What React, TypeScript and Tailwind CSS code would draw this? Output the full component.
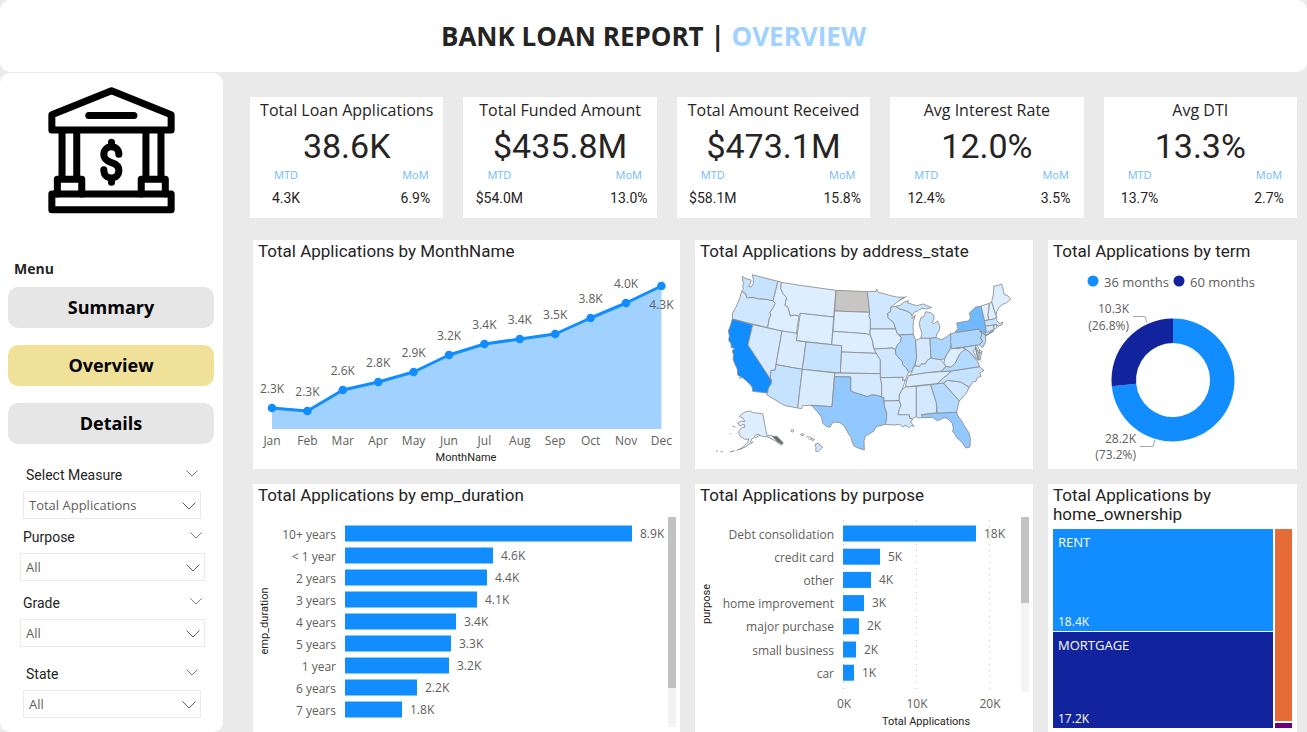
import React, { useId } from "react";

const SEGOE = "font-['Open_Sans','Noto_Sans',sans-serif]";
const DIN = "font-['Roboto','Liberation_Sans',sans-serif]";

const kpis = [
  { title: "Total Loan Applications", value: "38.6K", mtd: "4.3K", mom: "6.9%" },
  { title: "Total Funded Amount", value: "$435.8M", mtd: "$54.0M", mom: "13.0%" },
  { title: "Total Amount Received", value: "$473.1M", mtd: "$58.1M", mom: "15.8%" },
  { title: "Avg Interest Rate", value: "12.0%", mtd: "12.4%", mom: "3.5%" },
  { title: "Avg DTI", value: "13.3%", mtd: "13.7%", mom: "2.7%" },
];

const months = [
  { name: "Jan", y: 168, label: "2.3K" },
  { name: "Feb", y: 171, label: "2.3K" },
  { name: "Mar", y: 150, label: "2.6K" },
  { name: "Apr", y: 142, label: "2.8K" },
  { name: "May", y: 132, label: "2.9K" },
  { name: "Jun", y: 115, label: "3.2K" },
  { name: "Jul", y: 104, label: "3.4K" },
  { name: "Aug", y: 99, label: "3.4K" },
  { name: "Sep", y: 94, label: "3.5K" },
  { name: "Oct", y: 78, label: "3.8K" },
  { name: "Nov", y: 63, label: "4.0K" },
  { name: "Dec", y: 46, label: "4.3K" },
];

type Bar = { name: string; size: number; label: string };

const empBars: Bar[] = [
  { name: "10+ years", size: 287, label: "8.9K" },
  { name: "< 1 year", size: 148, label: "4.6K" },
  { name: "2 years", size: 142, label: "4.4K" },
  { name: "3 years", size: 132, label: "4.1K" },
  { name: "4 years", size: 111, label: "3.4K" },
  { name: "5 years", size: 106, label: "3.3K" },
  { name: "1 year", size: 104, label: "3.2K" },
  { name: "6 years", size: 72, label: "2.2K" },
  { name: "7 years", size: 57, label: "1.8K" },
];

const purposeBars: Bar[] = [
  { name: "Debt consolidation", size: 133, label: "18K" },
  { name: "credit card", size: 37, label: "5K" },
  { name: "other", size: 28, label: "4K" },
  { name: "home improvement", size: 21, label: "3K" },
  { name: "major purchase", size: 16, label: "2K" },
  { name: "small business", size: 13, label: "2K" },
  { name: "car", size: 11, label: "1K" },
];

/* State outlines: [id, fill, points] */
const states: [string, string, string][] = [
  ["WA", "#c5e2ff", "157,126 168,133 183,137 182,146 175,156 184,158 190,148 190,135 187,121 264,141 249,200 238,198 228,195 205,194 192,190 170,190 167,178 155,171 160,165 158,155 161,148 158,140"],
  ["OR", "#d0e8ff", "155,171 167,178 170,190 192,190 205,194 228,195 249,200 256,207 250,219 240,234 243,242 238,252 233,280 127,254 128,236 138,218 148,195"],
  ["CA", "#118dff", "127,254 188,271 174,332 245,438 243,450 236,460 232,476 188,471 187,460 182,452 166,437 158,430 143,422 142,405 136,392 129,375 131,362 127,350 134,342 124,340 123,328 116,318 118,304 115,290 122,272"],
  ["NV", "#d6eaff", "188,271 276,290 255,408 243,408 241,434 174,332"],
  ["ID", "#dceeff", "264,141 274,144 272,163 279,178 290,190 285,213 294,219 298,233 301,245 314,242 327,245 319,298 276,290 233,280 238,252 243,242 240,234 250,219 256,207 249,200"],
  ["MT", "#dceeff", "274,144 330,153 438,168 431,248 331,237 327,245 314,242 301,245 298,233 294,219 285,213 290,190 279,178 272,163"],
  ["WY", "#dceeff", "331,237 431,248 425,331 319,319"],
  ["UT", "#d9ecff", "276,290 322,297 319,319 348,323 337,405 258,391"],
  ["CO", "#c5e2ff", "348,323 455,334 451,416 337,405"],
  ["AZ", "#c5e2ff", "258,391 337,405 323,521 285,514 229,481 232,476 236,460 243,450 245,438 241,430 243,408 255,408"],
  ["NM", "#d9ecff", "337,405 434,416 426,517 364,513 337,514 335,523 323,521"],
  ["ND", "#c8c6c4", "438,168 532,172 535,190 539,234 434,230"],
  ["SD", "#dceeff", "434,230 539,234 537,245 542,255 541,285 539,293 543,305 528,298 514,297 429,291"],
  ["NE", "#dceeff", "429,291 514,297 528,298 541,302 547,318 549,333 558,357 455,353 455,334 425,331"],
  ["KS", "#d6eaff", "455,353 558,357 563,364 571,376 571,418 451,416"],
  ["OK", "#d3e9ff", "434,416 571,418 575,450 575,488 560,483 545,482 533,487 525,485 508,479 496,476 482,470 482,428 434,427"],
  ["TX", "#90c8ff", "434,427 482,428 482,470 496,476 508,479 525,485 533,487 545,482 560,483 582,490 583,515 590,535 590,552 586,570 570,574 558,578 552,590 540,597 526,606 522,620 523,647 507,642 492,635 486,622 484,610 474,596 463,575 450,565 432,563 426,567 420,579 408,575 398,567 395,550 382,532 364,513 426,517"],
  ["MN", "#cfe7ff", "532,172 558,171 560,165 566,175 580,177 598,183 620,188 643,189 624,201 602,219 602,232 593,237 594,250 611,265 617,284 541,284 541,255 537,245 539,234"],
  ["IA", "#dceeff", "541,284 617,284 622,298 634,310 632,322 622,332 616,346 608,341 552,344 547,318 540,300"],
  ["MO", "#cfe7ff", "552,344 608,341 616,346 618,360 629,374 637,380 638,391 650,403 656,414 650,426 646,440 637,438 639,429 571,430 571,376 563,364"],
  ["AR", "#d9ecff", "571,430 639,429 637,438 646,437 642,450 636,466 628,482 628,499 582,500 582,490 575,488 575,450"],
  ["LA", "#cfe7ff", "582,500 628,499 633,513 628,525 624,541 658,541 660,552 668,555 662,563 672,576 663,574 657,580 645,572 640,578 628,570 612,572 586,570 590,552 590,535 583,515"],
  ["WI", "#c8e4ff", "602,219 617,216 628,223 648,229 661,236 667,246 666,253 676,242 671,258 669,276 670,300 628,302 622,298 617,284 611,265 594,250 593,237 602,232"],
  ["IL", "#acd6ff", "628,302 670,300 677,318 680,370 677,385 670,397 668,410 658,414 650,403 638,391 637,380 629,374 618,360 616,346 622,332 632,322 634,310"],
  ["MI", "#c8e4ff", "617,216 632,212 642,203 655,199 653,206 664,209 680,214 700,209 725,220 707,224 696,222 685,229 672,234 667,243 661,236 648,229 628,223"],
  ["ML", "#c8e4ff", "692,312 696,298 690,280 688,265 693,250 702,246 707,232 722,235 732,243 732,254 726,265 733,268 742,260 750,275 748,288 741,298 738,310 720,312"],
  ["IN", "#d6eaff", "677,318 692,312 720,312 723,371 712,378 706,389 694,389 688,397 675,394 680,370"],
  ["OH", "#acd6ff", "720,312 738,310 755,316 769,308 782,298 786,322 780,345 772,358 764,373 752,376 736,374 723,371"],
  ["KY", "#cfe7ff", "658,424 665,415 668,405 675,394 688,397 694,389 706,389 712,378 723,371 736,374 752,376 762,387 768,396 755,410 713,415 680,420"],
  ["TN", "#d9ecff", "646,458 650,440 655,424 680,420 713,415 783,410 775,420 760,431 742,448 700,452"],
  ["MS", "#d9ecff", "646,458 679,456 679,547 668,552 660,552 658,541 624,541 628,525 633,513 628,499 628,482 636,466"],
  ["AL", "#d3e9ff", "679,456 722,451 739,505 740,536 695,541 698,550 686,551 679,547"],
  ["GA", "#b5daff", "722,451 761,446 768,456 782,470 795,485 808,500 803,520 800,534 742,537 739,505"],
  ["FL", "#90c8ff", "695,541 740,536 742,537 800,534 804,545 815,560 825,578 837,595 841,612 840,638 827,641 816,624 800,610 794,598 788,592 790,582 787,568 772,552 762,550 742,559 728,549 698,550"],
  ["SC", "#cfe7ff", "761,446 772,438 797,441 812,443 838,459 829,476 808,500 795,485 782,470"],
  ["NC", "#c5e2ff", "742,448 760,431 775,420 783,410 868,397 882,408 869,416 873,426 862,430 858,441 848,443 838,459 812,443 797,441 772,438 761,446"],
  ["VA", "#b5daff", "755,412 768,396 783,398 796,386 807,362 818,350 828,345 842,356 853,370 864,383 869,397 783,410"],
  ["WV", "#dceeff", "762,387 764,373 772,358 782,343 805,342 814,338 828,345 818,350 807,362 796,386 783,398 768,396"],
  ["MD", "#c5e2ff", "800,343 855,333 863,352 875,354 870,378 861,363 857,340 850,350 858,368 866,378 853,370 842,356 828,345 814,338"],
  ["DE", "#dceeff", "855,333 862,334 868,346 877,352 865,356"],
  ["PA", "#acd6ff", "782,298 795,295 868,284 876,297 872,311 878,322 868,331 786,343 782,325"],
  ["NJ", "#b5daff", "868,290 887,303 887,322 878,340 866,331 878,322 872,311 876,297"],
  ["NY", "#71b9ff", "795,294 804,282 800,266 820,262 835,260 842,250 838,236 856,219 873,215 879,240 885,265 887,303 908,288 912,290 888,305 868,284"],
  ["VT", "#dceeff", "873,215 898,207 897,226 894,240 896,257 884,259 879,240"],
  ["NH", "#dceeff", "898,207 905,202 912,225 920,247 912,254 896,257 894,240 897,226"],
  ["ME", "#dceeff", "905,202 910,180 912,155 922,154 934,149 938,158 942,180 952,184 963,193 950,205 938,210 928,218 920,232 918,243 912,225"],
  ["MA", "#c5e2ff", "884,259 912,254 920,247 920,259 929,268 939,263 936,271 926,276 919,271 911,272 886,276"],
  ["CT", "#cfe7ff", "886,276 911,272 912,285 890,295"],
  ["RI", "#dceeff", "911,272 919,271 921,280 912,285"],
  ["AK", "#dceeff", "155,540 165,533 178,530 190,535 218,538 231,604 244,603 255,610 262,607 280,627 273,632 255,619 233,608 213,605 206,600 196,602 192,610 184,615 182,626 168,637 150,645 164,634 173,625 176,614 165,615 152,607 146,598 148,588 155,580 165,578 163,570 149,574 143,566 152,560 164,562 160,552 148,547"],
  ["HI", "#cfe7ff", "375,630 384,627 398,638 383,653 377,650 378,640"],
];

function Chevron({ className }: { className: string }) {
  return (
    <svg viewBox="0 0 14 8" className={className} fill="none" stroke="#605e5c" aria-hidden="true">
      <path d="M0.5 0.5 L7 7 L13.5 0.5" />
    </svg>
  );
}

function BankIcon() {
  return (
    <svg
      viewBox="140 258 386 384"
      className="mx-auto w-[129px]"
      fill="none"
      stroke="#000"
      strokeWidth="21"
      strokeLinejoin="round"
      strokeLinecap="round"
      role="img"
      aria-label="Bank"
    >
      <path d="M154.500 344 L333 272 L511.500 344 V390 H154.500Z" />
      <path d="M265 346H400" />
      <path d="M185 390V537M229 390V537M436 390V537M481 390V537" strokeLinecap="butt" />
      <path d="M171 581V537H244V581M422 581V537H494V581" />
      <path d="M154.500 581H511.500V628H154.500Z" />
      <path d="M355 462C355 448 346 440 333 440C320 440 310 449 310 463C310 477 320 483 333 487C346 491 355 496 355 510C355 524 346 533 333 533C320 533 310 524 310 509M333 426V440M333 533V546" />
    </svg>
  );
}

function Slicer({ title, value, inset }: { title: string; value: string; inset?: boolean }) {
  const id = useId();
  return (
    <div className={inset ? "pr-[22px] pl-[23px]" : "pr-[18px] pl-5"}>
      <div className="flex h-5 items-center justify-between pr-[3px] pl-[3px]">
        <label htmlFor={id} className={`${DIN} text-[14px] text-[#252423]`}>
          {title}
        </label>
        <button type="button" aria-label={`Collapse ${title}`}>
          <Chevron className="mb-1 h-[7px] w-3" />
        </button>
      </div>
      <div className="relative mt-1.5">
        <select
          id={id}
          defaultValue={value}
          className={`${SEGOE} h-7 w-full appearance-none border border-[#eaeaea] bg-white px-[5px] text-[13px] text-[#605e5c]`}
        >
          <option>{value}</option>
        </select>
        <Chevron className="pointer-events-none absolute top-[11px] right-[5px] h-2 w-3.5" />
      </div>
    </div>
  );
}

function Panel({ title, children }: { title: string; children: React.ReactNode }) {
  return (
    <section className="flex flex-col bg-white">
      <h2 className={`${DIN} px-[5px] pt-0.5 text-[17px] leading-[19px] text-[#252423]`}>{title}</h2>
      {children}
    </section>
  );
}

function AreaChart() {
  const x = (i: number) => 19 + i * 35.4;
  const line = months.map((m, i) => `${x(i)},${m.y}`).join(" ");
  return (
    <svg viewBox="0 21 427 208" className="w-full" role="img" aria-label="Total Applications by MonthName">
      <polygon points={`${x(0)},189 ${line} ${x(11)},189`} fill="#a0d1ff" />
      <polyline points={line} fill="none" stroke="#118dff" strokeWidth="3" strokeLinejoin="round" />
      {months.map((m, i) => (
        <g key={m.name}>
          <circle cx={x(i)} cy={m.y} r="4.300" fill="#118dff" />
          <text x={x(i)} y={m.name === "Dec" ? m.y + 23 : m.y - 15} textAnchor="middle" className={`${SEGOE} fill-[#605e5c] text-[12px]`}>
            {m.label}
          </text>
          <text x={x(i)} y="205" textAnchor="middle" className={`${SEGOE} fill-[#605e5c] text-[12px]`}>
            {m.name}
          </text>
        </g>
      ))}
      <text x="213" y="221" textAnchor="middle" className={`${DIN} fill-[#252423] text-[11px]`}>
        MonthName
      </text>
    </svg>
  );
}

function StateMap() {
  return (
    <svg viewBox="15 80 1014 622" className="w-full" role="img" aria-label="Total Applications by state">
      <g stroke="#8a8a8a" strokeWidth="2.500" strokeLinejoin="round">
        {states.map(([id, fill, points]) => (
          <polygon key={id} points={points} fill={fill} />
        ))}
        <g fill="#dceeff">
          <circle cx="307" cy="589" r="4" />
          <ellipse cx="337" cy="601" rx="5" ry="3" />
          <path d="M349 607L361 608M355 613L362 616M362 610L374 616L367 619Z" />
        </g>
        <path d="M247 606L260 606L278 624L276 630L262 622Z" fill="#6b6b6b" />
        <path
          fill="none"
          strokeWidth="3"
          d="M78 650L83 650M92 652L98 652M120 653L134 649M140 648L155 642M119 598L122 598M128 575L136 579M182 628L190 622M195 611L210 603M147 430L155 432M628 198L650 186M856 340L864 372M868 345L866 376"
        />
      </g>
    </svg>
  );
}

function Donut() {
  const cx = 125;
  const cy = 140;
  const R = 61.5;
  const r = 37;
  const a = 0.734 * 2 * Math.PI;
  const p = (rad: number) => `${cx + rad * Math.sin(a)} ${cy - rad * Math.cos(a)}`;
  const label = `${SEGOE} fill-[#605e5c] text-[12px]`;
  return (
    <svg viewBox="0 21 249 208" className="w-full" role="img" aria-label="Total Applications by term">
      <circle cx="45" cy="41" r="5.500" fill="#118dff" />
      <text x="56" y="47" className={`${SEGOE} fill-[#605e5c] text-[13px]`}>36 months</text>
      <circle cx="131" cy="41" r="5.500" fill="#12239e" />
      <text x="142" y="47" className={`${SEGOE} fill-[#605e5c] text-[13px]`}>60 months</text>
      <path d={`M${cx} ${cy - R}A${R} ${R} 0 1 1 ${p(R)}L${p(r)}A${r} ${r} 0 1 0 ${cx} ${cy - r}Z`} fill="#118dff" />
      <path d={`M${p(R)}A${R} ${R} 0 0 1 ${cx} ${cy - R}V${cy - r}A${r} ${r} 0 0 0 ${p(r)}Z`} fill="#12239e" />
      <path d="M85 76.500H97L99 83M92 206.500H105L107 200" fill="none" stroke="#a6a6a6" />
      <text x="81" y="73" textAnchor="end" className={label}>10.3K</text>
      <text x="81" y="90" textAnchor="end" className={label}>(26.8%)</text>
      <text x="88" y="203" textAnchor="end" className={label}>28.2K</text>
      <text x="88" y="219" textAnchor="end" className={label}>(73.2%)</text>
    </svg>
  );
}

type BarChartProps = {
  bars: Bar[];
  width: number;
  left: number;
  step: number;
  axisTitle: string;
  axisY: number;
  thumb: number;
  track: number;
  children?: React.ReactNode;
};

function BarChart({ bars, width, left, step, axisTitle, axisY, thumb, track, children }: BarChartProps) {
  return (
    <svg viewBox={`0 21 ${width} 226`} className="w-full" role="img" aria-label={`Total Applications by ${axisTitle}`}>
      {children}
      {bars.map((b, i) => {
        const mid = 49.5 + i * step;
        return (
          <g key={b.name}>
            <text x={left - 9} y={mid + 5} textAnchor="end" className={`${SEGOE} fill-[#605e5c] text-[12px]`}>
              {b.name}
            </text>
            <rect x={left} y={mid - 8} width={b.size} height="16" fill="#118dff" />
            <text x={left + b.size + 8} y={mid + 4} className={`${SEGOE} fill-[#605e5c] text-[12px]`}>
              {b.label}
            </text>
          </g>
        );
      })}
      <text textAnchor="middle" transform={`translate(15 ${axisY}) rotate(-90)`} className={`${DIN} fill-[#252423] text-[11px]`}>
        {axisTitle}
      </text>
      <rect x={width - 12} y="33" width="8" height={track} fill="#f3f3f3" />
      <rect x={width - 12} y="33" width="8" height={thumb} fill="#c2c2c2" />
    </svg>
  );
}

function Treemap() {
  return (
    <div className={`${SEGOE} mx-[5px] mt-[5px] mb-1 flex flex-1 gap-0.5 text-[13px] leading-[18px] text-white`}>
      <div className="flex flex-1 flex-col gap-px">
        <div className="flex flex-[102] flex-col justify-between bg-[#118dff] px-[5px] pt-1">
          <span>RENT</span>
          <span className="text-[12px]">18.4K</span>
        </div>
        <div className="flex flex-[95] flex-col justify-between bg-[#12239e] px-[5px] pt-1">
          <span>MORTGAGE</span>
          <span className="text-[12px]">17.2K</span>
        </div>
      </div>
      <div className="flex w-[17px] flex-col gap-0.5">
        <div className="flex-1 bg-[#e66c37]" />
        <div className="h-[5px] bg-[#6b007b]" />
      </div>
    </div>
  );
}

export default function App() {
  return (
    <div className={`${SEGOE} flex min-h-screen flex-col bg-[#eaeaea]`}>
      <header className="flex h-[72px] items-center justify-center rounded-[10px] bg-white">
        <h1 className="text-[26px] font-bold text-[#252423]">
          BANK LOAN REPORT | <span className="text-[#a0d1ff]">OVERVIEW</span>
        </h1>
      </header>

      <div className="mt-px flex flex-1">
        <aside className="flex w-[223px] shrink-0 flex-col rounded-[10px] bg-white pt-[13px]">
          <BankIcon />
          <h2 className="mt-[45px] px-3.5 text-[14px] leading-5 font-bold text-[#252423]">Menu</h2>
          <nav className="mt-2 flex flex-col gap-[17px] pr-[9px] pl-2">
            <button type="button" className="h-[41px] rounded-[10px] bg-[#e6e6e6] text-[18px] font-bold text-black">
              Summary
            </button>
            <button type="button" aria-current="page" className="h-[41px] rounded-[10px] bg-[#f0e199] text-[18px] font-bold text-black">
              Overview
            </button>
            <button type="button" className="h-[41px] rounded-[10px] bg-[#e6e6e6] text-[18px] font-bold text-black">
              Details
            </button>
          </nav>
          <div className="mt-[21px] flex flex-col gap-2">
            <Slicer title="Select Measure" value="Total Applications" inset />
            <Slicer title="Purpose" value="All" />
          </div>
          <div className="mt-3 flex flex-col gap-[17px]">
            <Slicer title="Grade" value="All" />
            <Slicer title="State" value="All" inset />
          </div>
        </aside>

        <main className="flex min-w-0 flex-1 flex-col pt-6 pr-2.5">
          <div className="ml-[27px] grid grid-cols-5 gap-5">
            {kpis.map((k) => (
              <section key={k.title} className="flex h-[121px] flex-col bg-white pt-0.5">
                <h2 className="text-center text-[16px] leading-[22px] whitespace-nowrap text-[#252423]">{k.title}</h2>
                <p className={`${DIN} mt-1.5 text-center text-[34px] leading-[38px] text-[#252423]`}>{k.value}</p>
                <dl className="flex justify-between pl-2">
                  <div className="w-14 text-center">
                    <dt className="mt-0.5 text-[11px] leading-4 text-[#71b9ff]">MTD</dt>
                    <dd className={`${DIN} mt-1.5 text-[14px] leading-[18px] text-[#252423]`}>{k.mtd}</dd>
                  </div>
                  <div className="w-14 text-center">
                    <dt className="mt-0.5 text-[11px] leading-4 text-[#71b9ff]">MoM</dt>
                    <dd className={`${DIN} mt-1.5 text-[14px] leading-[18px] text-[#252423]`}>{k.mom}</dd>
                  </div>
                </dl>
              </section>
            ))}
          </div>

          <div className="mt-[22px] ml-[30px] grid flex-1 grid-cols-[427fr_338fr_249fr] grid-rows-[auto_1fr] gap-[15px]">
            <Panel title="Total Applications by MonthName">
              <AreaChart />
            </Panel>
            <Panel title="Total Applications by address_state">
              <StateMap />
            </Panel>
            <Panel title="Total Applications by term">
              <Donut />
            </Panel>
            <Panel title="Total Applications by emp_duration">
              <BarChart bars={empBars} width={427} left={92} step={22} axisTitle="emp_duration" axisY={137} thumb={171} track={210} />
            </Panel>
            <Panel title="Total Applications by purpose">
              <BarChart bars={purposeBars} width={338} left={148} step={23.2} axisTitle="purpose" axisY={120} thumb={86} track={175}>
                <path d="M148.500 36V209M221.500 36V209M294.500 36V209" stroke="#c8c8c8" strokeDasharray="1 5" />
                {["0K", "10K", "20K"].map((t, i) => (
                  <text key={t} x={149 + i * 73} y="224" textAnchor="middle" className={`${SEGOE} fill-[#605e5c] text-[12px]`}>
                    {t}
                  </text>
                ))}
                <text x="231" y="241" textAnchor="middle" className={`${DIN} fill-[#252423] text-[11px]`}>
                  Total Applications
                </text>
              </BarChart>
            </Panel>
            <Panel title="Total Applications by home_ownership">
              <Treemap />
            </Panel>
          </div>
        </main>
      </div>
    </div>
  );
}
